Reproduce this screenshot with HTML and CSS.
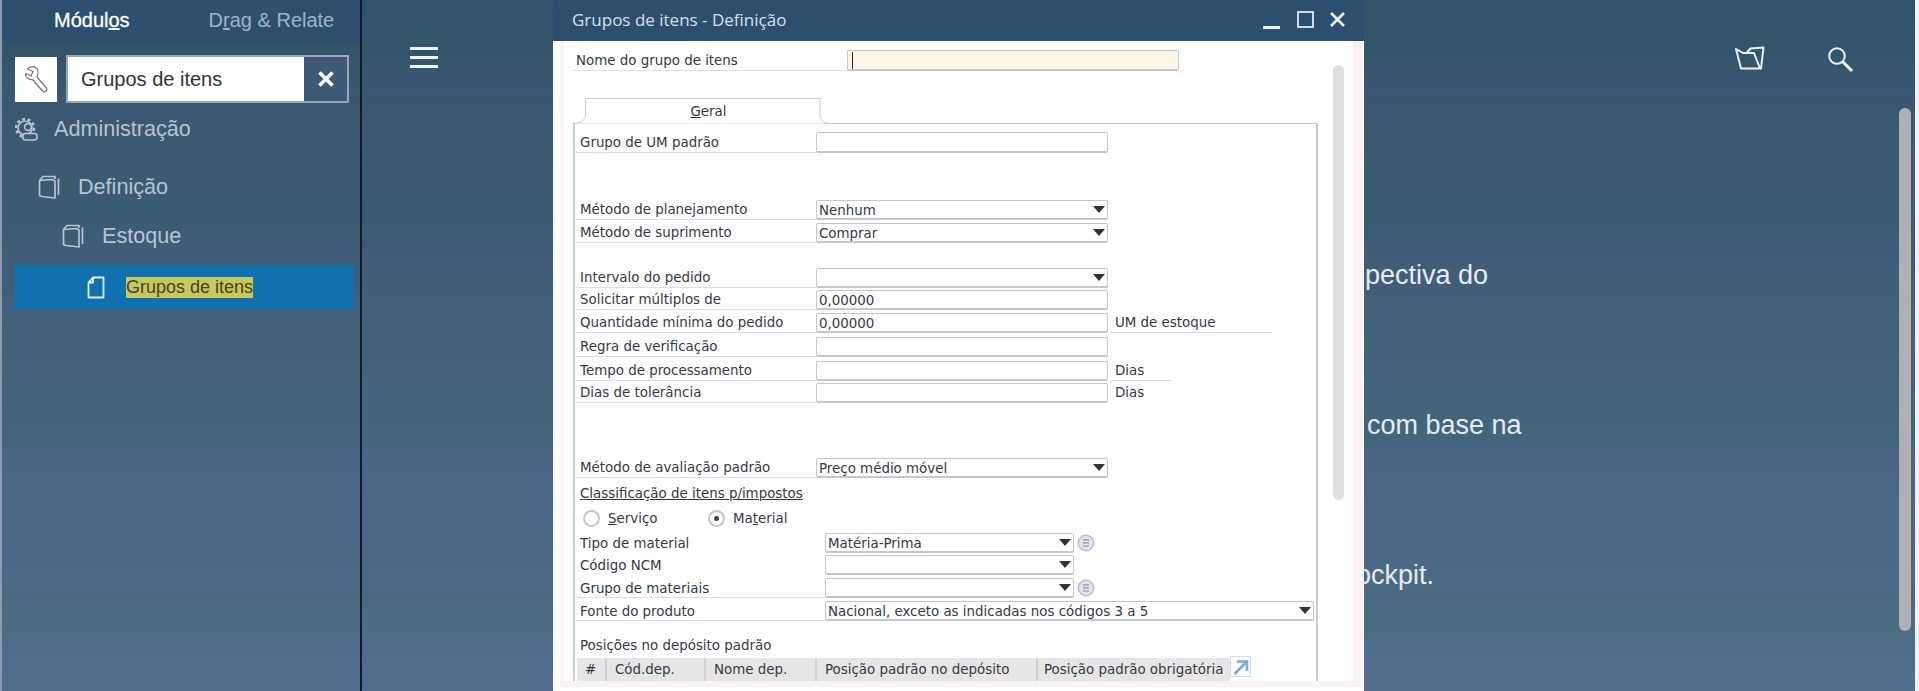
FILE: index.html
```html
<!DOCTYPE html>
<html lang="pt">
<head>
<meta charset="utf-8">
<title>Grupos de itens - Definição</title>
<link rel="stylesheet" href="styles.css">
</head>
<body>
<svg class="defs" width="0" height="0" aria-hidden="true">
  <symbol id="book" viewBox="0 0 22 24"><path d="M1.5 5.5 L14.5 4.5 L17 6 V23 L4 21.5 L1.5 20.5 Z M1.5 5.5 L5 1.5 L17 1.5 L17 4 M20.5 3.5 V20" fill="none" stroke="currentColor" stroke-width="1.7" stroke-linejoin="round"/></symbol>
  <symbol id="list" viewBox="0 0 18 18"><circle cx="9" cy="9" r="7.7" fill="#dfe4ef" stroke="#b6c0d8" stroke-width="1.6"/><path d="M6 5.8H12M6 8.9H12M6 12H12" stroke="#8b8f9a" stroke-width="1.2"/></symbol>
</svg>

<aside class="side">
  <div class="side-tabs">
    <span class="side-tab active">Módul<u>o</u>s</span>
    <span class="side-tab">D<u>r</u>ag &amp; Relate</span>
  </div>
  <div class="search">
    <span class="wrench">
      <svg width="25" height="29" viewBox="0 0 25 29"><path d="M11 2 C7 1 4 2.5 3.5 4 L9 6.5 L7 11 L1.5 8.5 C1 12 4.5 15 8.5 14.5 L18.5 26 C20.5 28 24 25.5 22.5 23 L13 12 C15 8 14 4 11 2Z" fill="#fff" stroke="#7d7670" stroke-width="1.3" stroke-linejoin="round"/></svg>
    </span>
    <div class="search-box">
      <span class="search-text">Grupos de itens</span>
      <span class="search-x">
        <svg width="18" height="18" viewBox="0 0 18 18"><path d="M2.5 2.5L15.5 15.5M15.5 2.5L2.5 15.5" stroke="#fff" stroke-width="3.6"/></svg>
      </span>
    </div>
  </div>
  <div class="tree-item level0">
    <svg class="ico" width="24" height="25" viewBox="0 0 24 25"><circle cx="10" cy="11" r="7" fill="none" stroke="currentColor" stroke-width="1.7"/><circle cx="10" cy="11" r="9" fill="none" stroke="currentColor" stroke-width="2.4" stroke-dasharray="3 2.6"/><circle cx="13" cy="10" r="3.4" fill="#3f5a74" stroke="currentColor" stroke-width="1.6"/><rect x="8" y="16.5" width="14" height="6.5" rx="2.5" fill="#3f5a74" stroke="currentColor" stroke-width="1.6"/></svg>
    <span>Administração</span>
  </div>
  <div class="tree-item level1">
    <svg class="ico" width="22" height="24"><use href="#book"/></svg>
    <span>Definição</span>
  </div>
  <div class="tree-item level2">
    <svg class="ico" width="22" height="24"><use href="#book"/></svg>
    <span>Estoque</span>
  </div>
  <div class="tree-item level3">
    <svg class="ico" width="18" height="23" viewBox="0 0 18 23"><path d="M6 1.5H16.5V21.5H1.5V6.5ZM6 1.5V6.5H1.5" fill="none" stroke="#e4edf5" stroke-width="1.8" stroke-linejoin="round"/></svg>
    <span class="hit">Grupos de itens</span>
  </div>
</aside>

<main class="desk">
  <header class="desk-top">
    <span class="burger"><i></i><i></i><i></i></span>
    <span class="desk-tools">
      <svg width="30" height="24" viewBox="0 0 30 24"><path d="M1 3L8 7H19L25 22.5H6Z" fill="none" stroke="#eef2f5" stroke-width="2" stroke-linejoin="round"/><path d="M12 6.5L15.5 2.5L28.5 1.5L26 22.5H25" fill="none" stroke="#eef2f5" stroke-width="2" stroke-linejoin="round"/></svg>
      <svg width="27" height="27" viewBox="0 0 27 27"><circle cx="10" cy="10" r="7.8" fill="none" stroke="#e8edf1" stroke-width="2"/><path d="M15.5 15.5L25 25" stroke="#f2f4f6" stroke-width="3"/></svg>
    </span>
  </header>
  <div class="desk-text">
    <p>pectiva do</p>
    <p class="shift">com base na</p>
    <p class="back">ockpit.</p>
  </div>
  <div class="page-scroll"></div>
</main>

<section class="win">
  <div class="win-title">
    <span class="win-name">Grupos de itens - Definição</span>
    <span class="win-btns">
      <svg width="18" height="18" viewBox="0 0 18 18"><path d="M0 16.5H17" stroke="#eef2f5" stroke-width="3"/></svg>
      <svg width="17" height="17" viewBox="0 0 17 17"><rect x="1" y="1" width="15" height="15" fill="none" stroke="#eef2f5" stroke-width="1.7"/></svg>
      <svg width="15" height="15" viewBox="0 0 15 15"><path d="M1 1L14 14M14 1L1 14" stroke="#f4f6f8" stroke-width="2.6"/></svg>
    </span>
  </div>
  <div class="win-body">
    <div class="name-row">
      <label class="name-label">Nome do grupo de itens</label>
      <span class="field required"><i class="caret"></i></span>
    </div>
    <div class="tab">
      <svg class="tab-shape" width="262" height="26" viewBox="0 0 262 26"><path d="M0 25.5 Q13.5 25 13.5 17 V.5 H248 V17 Q248 25 258 25.5" fill="#fff" stroke="#c9cccc" stroke-width="1"/></svg>
      <span class="tab-text"><u>G</u>eral</span>
    </div>
    <div class="panel">
      <div class="row first"><label class="lbl">Grupo de UM padrão</label><span class="field"></span></div>
      <div class="row mt47"><label class="lbl">Método de planejamento</label><span class="field select">Nenhum</span></div>
      <div class="row mt3"><label class="lbl">Método de suprimento</label><span class="field select">Comprar</span></div>
      <div class="row mt25"><label class="lbl">Intervalo do pedido</label><span class="field select"></span></div>
      <div class="row mt2"><label class="lbl">Solicitar múltiplos de</label><span class="field">0,00000</span></div>
      <div class="row mt3"><label class="lbl">Quantidade mínima do pedido</label><span class="field">0,00000</span><span class="unit wide">UM de estoque</span></div>
      <div class="row mt4"><label class="lbl">Regra de verificação</label><span class="field"></span></div>
      <div class="row mt4"><label class="lbl">Tempo de processamento</label><span class="field"></span><span class="unit">Dias</span></div>
      <div class="row mt2"><label class="lbl">Dias de tolerância</label><span class="field"></span><span class="unit plain">Dias</span></div>
      <div class="row mt55"><label class="lbl">Método de avaliação padrão</label><span class="field select">Preço médio móvel</span></div>
      <div class="caption mt6"><u>Classificação de itens p/impostos</u></div>
      <div class="radios">
        <span class="radio"><i class="dot"></i><span><u>S</u>erviço</span></span>
        <span class="radio"><i class="dot on"></i><span>Ma<u>t</u>erial</span></span>
      </div>
      <div class="row tall mt6"><label class="lbl long plain">Tipo de material</label><span class="field select mid">Matéria-Prima</span><svg class="list-ico" width="18" height="18"><use href="#list"/></svg></div>
      <div class="row tall mt2"><label class="lbl long plain">Código NCM</label><span class="field select mid"></span></div>
      <div class="row tall mt3"><label class="lbl long">Grupo de materiais</label><span class="field select mid"></span><svg class="list-ico" width="18" height="18"><use href="#list"/></svg></div>
      <div class="row tall mt3"><label class="lbl long">Fonte do produto</label><span class="field select full">Nacional, exceto as indicadas nos códigos 3 a 5</span></div>
      <div class="caption mt16 up">Posições no depósito padrão</div>
      <div class="grid-wrap">
        <div class="grid-head">
          <span class="col c1">#</span>
          <span class="col c2">Cód.dep.</span>
          <span class="col c3">Nome dep.</span>
          <span class="col c4">Posição padrão no depósito</span>
          <span class="col c5">Posição padrão obrigatória</span>
        </div>
        <span class="expand">
          <svg width="16" height="16" viewBox="0 0 16 16"><path d="M1.5 15L13 3.5M4 2.5H14V12" fill="none" stroke="#7ea6e0" stroke-width="2.6"/></svg>
        </span>
      </div>
    </div>
    <div class="win-scroll"></div>
  </div>
</section>
</body>
</html>
```

FILE: styles.css
```css
* { box-sizing: border-box; }
html, body { margin: 0; height: 691px; overflow: hidden; }
body {
  display: flex;
  position: relative;
  font-family: "Liberation Sans", sans-serif;
  background: linear-gradient(180deg, #2f5468 0, #33556a 55px, #3a5673 85px, #3a5970 140px, #3a5d74 225px, #405c78 250px, #42607a 310px, #42667c 440px, #4b6585 455px, #4b6886 510px, #4a6a84 600px, #4a6d82 632px, #4e6c8c 645px, #536d8c 691px);
}
.defs { position: absolute; }

/* sidebar */
.side { width: 362px; height: 691px; flex: none; border-left: 2px solid #8c9cb0; border-right: 2px solid #0f1c28; }
.side-tabs { height: 41px; background: #2c4f6f; display: flex; align-items: center; }
.side-tab { font-size: 20px; color: #9cb3cc; }
.side-tab.active { color: #fff; margin-left: 52px; margin-right: 79px; -webkit-text-stroke: .3px #fff; }
.search { display: flex; align-items: center; height: 48px; margin: 14px 0 0 13px; gap: 9px; }
.wrench { width: 42px; height: 45px; background: #fff; display: flex; align-items: center; justify-content: center; }
.search-box { width: 283px; height: 48px; border: 2px solid #9aa6b3; display: flex; background: #fff; }
.search-text { flex: 1; font-size: 20px; color: #333; line-height: 44px; padding-left: 13px; }
.search-x { width: 43px; background: #3f5a78; display: flex; align-items: center; justify-content: center; }
.tree-item { display: flex; align-items: center; color: #b7c4d2; font-size: 21.6px; height: 30px; }
.tree-item .ico { flex: none; }
.level0 { margin-top: 11px; padding-left: 13px; gap: 15px; }
.level1 { margin-top: 28px; padding-left: 36px; gap: 18px; }
.level2 { margin-top: 19px; padding-left: 60px; gap: 18px; }
.level3 {
  margin: 14px 0 0 12px; width: 340px; height: 44px; background: #1170ae;
  padding-left: 73px; gap: 21px;
}
.hit { background: #c4c95a; color: #4a3f2a; font-size: 18px; line-height: 21px; }

/* desktop */
.desk { flex: 1; position: relative; color: #e6ebf0; border-right: 4px solid #f3f3f6; }
.desk-top { height: 200px; display: flex; align-items: flex-start; justify-content: space-between; padding: 46px 61px 0 48px; }
.burger { width: 28px; display: flex; flex-direction: column; gap: 6px; padding-top: 1px; }
.burger i { display: block; height: 3px; background: #f2f5f7; }
.desk-tools { display: flex; gap: 62px; align-items: flex-start; margin-right: 0; }
.desk-text { margin-left: 1003px; font-size: 27px; line-height: 150px; }
.desk-text p { margin: 0; height: 150px; white-space: nowrap; }
.desk-text .shift { margin-left: 2px; }
.desk-text .back { margin-left: -9px; }
.page-scroll { position: absolute; left: 1537px; top: 108px; width: 12px; height: 523px; border-radius: 6px; background: #b0b0b4; }

/* window */
.win { position: absolute; left: 553px; top: 0; width: 811px; height: 691px; background: #fff; overflow: hidden; font-family: "DejaVu Sans", sans-serif; font-size: 13.4px; color: #333a44; }
.win-title { height: 41px; background: #2c4f6f; display: flex; align-items: center; justify-content: space-between; padding: 0 19px 2px 19px; }
.win-name { font-family: "Open Sans", sans-serif; font-size: 17px; color: #d6e0e8; }
.win-btns { display: flex; gap: 16px; align-items: center; }
.win-btns svg:first-child { margin-top: 1px; }
.win-body { position: relative; height: 646px; padding: 9px 45px 0 20px; border-left: 7px solid #fff; }
.win-body::after {
  content: ""; position: absolute; left: 0; top: 0; right: 1px; bottom: 0; pointer-events: none;
  border: solid #f9f3f5; border-width: 0 10px 6px 4px;
}
.name-row { display: flex; height: 21px; }
.name-label { width: 274px; padding-left: 3px; border-bottom: 1px solid #d8e0e4; line-height: 22px; margin-left: -7px; }
.field {
  display: block; width: 292px; height: 100%; border: 1px solid #c4c8c8; border-bottom-width: 2px; border-radius: 2px;
  background: #fff; padding-left: 2px; line-height: 19px; position: relative; white-space: nowrap;
}
.required { width: 332px; background: #fff5e6; }
.caret { position: absolute; left: 4px; top: 1px; width: 1px; height: 17px; background: #222; }
.tab { position: relative; height: 26px; margin: 27px 0 -1px -8px; width: 262px; }
.tab-shape { position: absolute; left: 0; top: 0; }
.tab-text { position: absolute; left: 0; top: 5px; text-align: center; line-height: 18px; width: 273px; }
.panel { margin-left: -7px; width: 745px; height: 559px; overflow: hidden; border: solid #c9cccc; border-width: 1px 2px 0 2px; padding: 8px 0 0 1px; }
.win-scroll { position: absolute; left: 773px; top: 24px; width: 11px; height: 435px; border-radius: 6px; background: #dfdfdf; }

.row { display: flex; height: 20px; }
.row.first { height: 21px; }
.first .lbl { line-height: 21px; }
.lbl { width: 240px; padding-left: 4px; border-bottom: 1px solid #d8e0e4; line-height: 20px; white-space: nowrap; }
.lbl.long { width: 249px; }
.lbl.plain { border-bottom-color: transparent; }
.tall .lbl { line-height: 21px; }
.select::after { content: ""; position: absolute; right: 2px; top: 5px; border: 6px solid transparent; border-top: 7px solid #333; border-bottom: 0; }
.mid { width: 249px; }
.full { width: 489px; }
.unit { width: 63px; margin-left: 2px; padding-left: 5px; line-height: 20px; border-bottom: 1px solid #d8e0e4; }
.unit.wide { width: 162px; }
.unit.plain { border-bottom-color: transparent; }
.list-ico { margin: 1px 0 0 3px; }
.caption { height: 18px; line-height: 19px; padding-left: 4px; }
.caption.up { line-height: 17px; }
.radios { display: flex; height: 18px; margin-top: 7px; padding-left: 7px; }
.radio { display: flex; align-items: center; gap: 8px; width: 125px; }
.dot { width: 17px; height: 17px; border-radius: 50%; border: 2px solid #c2c6cc; background: #fff; position: relative; }
.dot.on::after { content: ""; position: absolute; left: 4px; top: 4px; width: 5px; height: 5px; border-radius: 50%; background: #444; }
.grid-wrap { display: flex; margin: 3px 0 0 1px; }
.grid-head { display: flex; width: 653px; height: 24px; background: #e6e6e6; }
.col { height: 24px; line-height: 23px; border-right: 2px solid #d0d0d0; padding-left: 8px; white-space: nowrap; }
.c1 { width: 30px; }
.c2 { width: 99px; }
.c3 { width: 111px; }
.c4 { width: 221px; }
.c5 { width: 192px; border-right: 0; padding-left: 6px; }
.expand { width: 21px; height: 21px; margin-top: -2px; border: 1px solid #cfdcf0; display: flex; align-items: center; justify-content: center; background: #fff; }
.mt2 { margin-top: 2px; }
.mt3 { margin-top: 3px; }
.mt4 { margin-top: 4px; }
.mt6 { margin-top: 6px; }
.mt16 { margin-top: 16px; }
.mt25 { margin-top: 25px; }
.mt47 { margin-top: 47px; }
.mt55 { margin-top: 55px; }
```
